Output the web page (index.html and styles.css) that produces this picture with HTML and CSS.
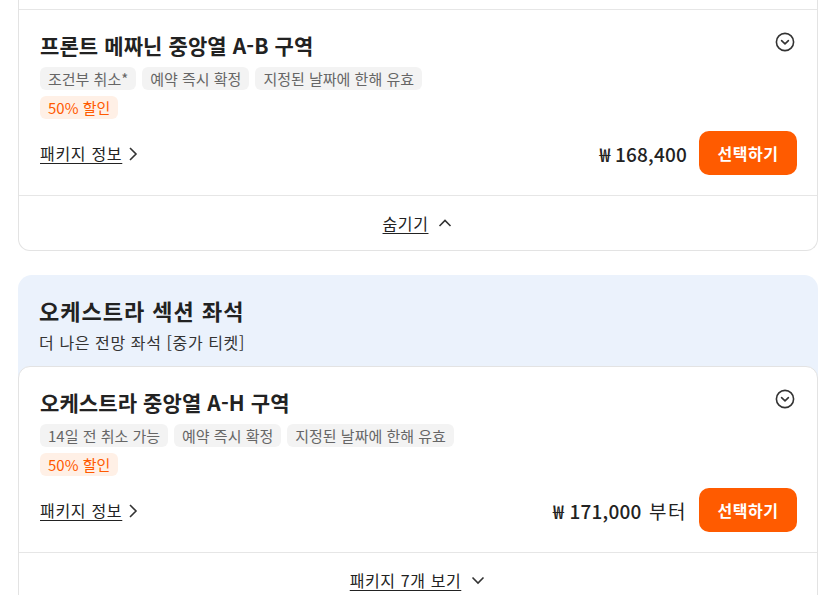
FILE: index.html
```html
<!DOCTYPE html>
<html lang="ko">
<head>
<meta charset="utf-8">
<link rel="stylesheet" href="styles.css">
</head>
<body>
<div class="page">
  <div class="card card-top">
    <div class="stub"></div>
    <div class="item">
      <div class="item-head">
        <h3 class="item-title">프론트 메짜닌 중앙열 A-B 구역</h3>
        <svg class="toggle" width="20" height="20" viewBox="0 0 20 20"><circle cx="10" cy="10" r="8.6" fill="none" stroke="#333" stroke-width="1.6"/><path d="M6.6 8.6 L10 11.8 L13.4 8.6" fill="none" stroke="#333" stroke-width="1.6" stroke-linecap="round" stroke-linejoin="round"/></svg>
      </div>
      <div class="tags">
        <span class="tag">조건부 취소*</span>
        <span class="tag">예약 즉시 확정</span>
        <span class="tag">지정된 날짜에 한해 유효</span>
      </div>
      <div class="tags">
        <span class="tag tag-sale">50% 할인</span>
      </div>
      <div class="item-foot">
        <a class="info">패키지 정보<svg width="14" height="16" viewBox="0 0 14 16"><path d="M4 2 L10 8 L4 14" fill="none" stroke="#333" stroke-width="1.6"/></svg></a>
        <div class="buy">
          <span class="price">₩ 168,400</span>
          <button class="btn">선택하기</button>
        </div>
      </div>
    </div>
    <div class="more">
      <a class="more-link">숨기기</a>
      <svg width="16" height="12" viewBox="0 0 16 12"><path d="M2.5 9 L8 3.5 L13.5 9" fill="none" stroke="#333" stroke-width="1.6"/></svg>
    </div>
  </div>

  <div class="section">
    <div class="section-head">
      <h2 class="section-title">오케스트라 섹션 좌석</h2>
      <p class="section-sub">더 나은 전망 좌석 [중가 티켓]</p>
    </div>
    <div class="card card-inner">
      <div class="item">
        <div class="item-head">
          <h3 class="item-title">오케스트라 중앙열 A-H 구역</h3>
          <svg class="toggle" width="20" height="20" viewBox="0 0 20 20"><circle cx="10" cy="10" r="8.6" fill="none" stroke="#333" stroke-width="1.6"/><path d="M6.6 8.6 L10 11.8 L13.4 8.6" fill="none" stroke="#333" stroke-width="1.6" stroke-linecap="round" stroke-linejoin="round"/></svg>
        </div>
        <div class="tags">
          <span class="tag">14일 전 취소 가능</span>
          <span class="tag">예약 즉시 확정</span>
          <span class="tag">지정된 날짜에 한해 유효</span>
        </div>
        <div class="tags">
          <span class="tag tag-sale">50% 할인</span>
        </div>
        <div class="item-foot">
          <a class="info">패키지 정보<svg width="14" height="16" viewBox="0 0 14 16"><path d="M4 2 L10 8 L4 14" fill="none" stroke="#333" stroke-width="1.6"/></svg></a>
          <div class="buy">
            <span class="price">₩ 171,000 <span class="from">부터</span></span>
            <button class="btn">선택하기</button>
          </div>
        </div>
      </div>
      <div class="more">
        <a class="more-link">패키지 7개 보기</a>
        <svg width="16" height="12" viewBox="0 0 16 12"><path d="M2.5 3.5 L8 9 L13.5 3.5" fill="none" stroke="#333" stroke-width="1.6"/></svg>
      </div>
    </div>
  </div>
</div>
</body>
</html>
```

FILE: styles.css
```css
* { box-sizing: border-box; }
html, body { margin: 0; padding: 0; background: #fff; }
body {
  font-family: "Noto Sans CJK KR", "Noto Sans", sans-serif;
  color: #222;
  overflow: hidden;
}
.page {
  width: 800px;
  margin-left: 18px;
}
.card {
  background: #fff;
  border: 1px solid #e3e3e3;
  border-radius: 12px;
}
.card-top {
  border-top: none;
  border-top-left-radius: 0;
  border-top-right-radius: 0;
}
.stub {
  height: 10px;
  border-bottom: 1px solid #e6e6e6;
}
.item {
  padding: 21px 20px 20px 21px;
  border-bottom: 1px solid #e6e6e6;
}
.item-head {
  display: flex;
  justify-content: space-between;
  align-items: flex-start;
}
.item-title {
  margin: 0;
  font-size: 21px;
  font-weight: 700;
  line-height: 29px;
  letter-spacing: 0.1px;
  color: #222;
}
.toggle { margin-top: 1px; margin-right: 2px; }
.tags {
  display: flex;
  gap: 6px;
  margin-top: 6px;
}
.item-head + .tags { margin-top: 7px; }
.tag {
  display: inline-block;
  height: 23px;
  line-height: 23px;
  padding: 0 8px;
  border-radius: 6px;
  background: #f3f3f3;
  color: #666;
  font-size: 15px;
}
.tag-sale {
  background: #fff0e6;
  color: #ff5a00;
}
.item-foot {
  margin-top: 12px;
  display: flex;
  justify-content: space-between;
  align-items: center;
}
.info {
  display: flex;
  align-items: center;
  gap: 4px;
  font-size: 16px;
  letter-spacing: 0.7px;
  color: #222;
  text-decoration: underline;
  text-underline-offset: 3px;
}
.info svg { margin-top: 1px; }
.buy {
  display: flex;
  align-items: center;
  gap: 12px;
}
.price {
  font-size: 19px;
  font-weight: 500;
  letter-spacing: 0.2px;
  color: #222;
}
.from {
  font-weight: 400;
  margin-left: 2px;
  letter-spacing: 1.5px;
}
.btn {
  width: 98px;
  height: 44px;
  border: none;
  border-radius: 10px;
  background: #ff5b00;
  color: #fff;
  font-family: inherit;
  font-size: 16px;
  font-weight: 700;
  letter-spacing: 0.5px;
}
.more {
  height: 54px;
  display: flex;
  justify-content: center;
  align-items: center;
  gap: 9px;
}
.more-link {
  font-size: 16px;
  letter-spacing: 0.6px;
  color: #222;
  text-decoration: underline;
  text-underline-offset: 3px;
}
.section {
  margin-top: 24px;
  background: #ebf2fc;
  border-radius: 14px;
}
.section-head {
  padding: 21px 21px 13px 21px;
}
.section-title {
  margin: 0;
  font-size: 22px;
  font-weight: 700;
  line-height: 29px;
  letter-spacing: 1px;
}
.section-sub {
  margin: 6px 0 0 0;
  font-size: 16px;
  line-height: 22px;
  letter-spacing: 0.6px;
  color: #333;
}
.card-inner {
  border-bottom-left-radius: 0;
  border-bottom-right-radius: 0;
}
.card-inner .item { padding-top: 21px; }
```
